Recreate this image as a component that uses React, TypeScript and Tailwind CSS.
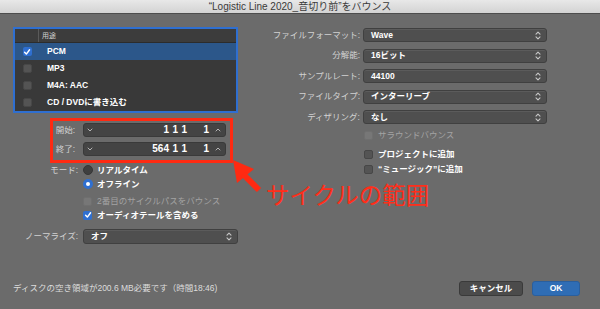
import React from 'react';

const PopupArrows = () => (
    <svg width="6" height="9" viewBox="0 0 6 9" fill="none" stroke="#c8c8c8" strokeWidth="1.1" strokeLinecap="round" strokeLinejoin="round">
        <path d="M1 3.2 3 1.2 5 3.2" />
        <path d="M1 5.8 3 7.8 5 5.8" />
    </svg>
);

const Chevron = ({ up }: { up?: boolean }) => (
    <svg width="6" height="4" viewBox="0 0 6 4" fill="none" stroke="#b5b5b5" strokeWidth="1" strokeLinecap="round" strokeLinejoin="round">
        <path d={up ? 'M1 3 3 1 5 3' : 'M1 1 3 3 5 1'} />
    </svg>
);

const Check = () => (
    <svg width="8" height="8" viewBox="0 0 10 10" fill="none" stroke="white" strokeWidth="1.8" strokeLinecap="round" strokeLinejoin="round">
        <path d="M2 5.3 4.2 7.6 8.2 2.2" />
    </svg>
);

const Box = ({ checked, disabled }: { checked?: boolean; disabled?: boolean }) => (
    <div
        className={`w-[9px] h-[9px] rounded-[2px] flex items-center justify-center shrink-0 ${
            checked ? 'bg-[#2f6fd0]' : disabled ? 'bg-[#777777] border border-[#6f6f6f]' : 'bg-[#545454] border border-[#474747]'
        }`}
    >
        {checked && <Check />}
    </div>
);

const Popup = ({ value, className = '' }: { value: string; className?: string }) => (
    <div
        className={`flex items-center justify-between h-[14px] rounded-[3px] bg-[#4f4f4f] border border-[#404040] shadow-[inset_0_1px_0_rgba(255,255,255,0.07)] pl-[7px] pr-[5px] ${className}`}
    >
        <span className="text-[8.5px] font-bold text-white leading-none">{value}</span>
        <PopupArrows />
    </div>
);

const PositionField = ({ label, bar }: { label: string; bar: string }) => (
    <div className="flex items-center h-[14px]">
        <span className="w-[25px] pr-[3px] text-right text-[8.5px] text-[#d2d2d2] leading-none">{label}</span>
        <div className="flex items-center w-[143px] h-[14px] ml-[5px] rounded-[3px] bg-[#444444] border border-[#3a3a3a] pl-[3px] pr-[4px]">
            <Chevron />
            <div className="flex-1 flex justify-end text-[10px] font-bold text-white leading-none">
                <span className="w-[24px] text-right">{bar}</span>
                <span className="w-[9px] text-right">1</span>
                <span className="w-[9px] text-right">1</span>
                <span className="w-[22px] text-right">1</span>
            </div>
            <div className="ml-[6px]">
                <Chevron up />
            </div>
        </div>
    </div>
);

const formats = [
    { name: 'PCM', checked: true },
    { name: 'MP3', checked: false },
    { name: 'M4A: AAC', checked: false },
    { name: 'CD / DVDに書き込む', checked: false },
];

const settings = [
    { label: 'ファイルフォーマット:', value: 'Wave' },
    { label: '分解能:', value: '16ビット' },
    { label: 'サンプルレート:', value: '44100' },
    { label: 'ファイルタイプ:', value: 'インターリーブ' },
    { label: 'ディザリング:', value: 'なし' },
];

export default function App() {
    return (
        <div className="relative w-[600px] h-[309px] flex flex-col bg-[#6b6b6b] overflow-hidden font-['Liberation_Sans','Noto_Sans_CJK_JP',sans-serif]">
            {/* title bar */}
            <div className="h-[14px] shrink-0 flex items-center justify-center bg-gradient-to-b from-[#e8e8e8] to-[#d3d3d3] border-b border-[#4d4d4d]">
                <span className="text-[10px] text-[#3a3a3a] leading-none">“Logistic Line 2020_音切り前”をバウンス</span>
            </div>

            <div className="flex pl-[13px] pt-[13px]">
                {/* left column */}
                <div className="w-[225px] flex flex-col">
                    <div className="border-2 border-[#2f6fd0] bg-[#393939]">
                        <div className="flex h-[14px] bg-[#3c3c3c] border-b border-[#2c2c2c]">
                            <div className="w-[24px] border-r border-[#5a5a5a]" />
                            <div className="pl-[3px] flex items-center text-[7px] text-[#cfcfcf] leading-none">用途</div>
                        </div>
                        {formats.map((f) => (
                            <div key={f.name} className={`flex items-center h-[17px] ${f.checked ? 'bg-[#2c578a]' : ''}`}>
                                <div className="w-[24px] flex justify-center">
                                    <Box checked={f.checked} />
                                </div>
                                <span className="pl-[8px] text-[8.5px] font-bold text-white leading-none">{f.name}</span>
                            </div>
                        ))}
                    </div>

                    {/* cycle range (annotated) */}
                    <div className="ml-[37px] mt-[5px] w-[183px] border-[3px] border-[#ff2a12] pt-[2px] pb-[4px] flex flex-col gap-[5px]">
                        <PositionField label="開始:" bar="1" />
                        <PositionField label="終了:" bar="564" />
                    </div>

                    <div className="flex items-center h-[14px]">
                        <span className="w-[65px] text-right text-[8.5px] text-[#d2d2d2] leading-none">モード:</span>
                        <div className="ml-[5px] w-[10px] h-[10px] rounded-full bg-[#3f3f3f] border border-[#363636]" />
                        <span className="ml-[4px] text-[8.5px] font-bold text-white leading-none">リアルタイム</span>
                    </div>
                    <div className="flex items-center h-[14px]">
                        <div className="ml-[70px] w-[10px] h-[10px] rounded-full bg-[#2f6fd0] flex items-center justify-center">
                            <div className="w-[4px] h-[4px] rounded-full bg-white" />
                        </div>
                        <span className="ml-[4px] text-[8.5px] font-bold text-white leading-none">オフライン</span>
                    </div>
                    <div className="flex items-center h-[14px] mt-[3px] ml-[70px]">
                        <Box disabled />
                        <span className="ml-[5px] text-[8.5px] text-[#a3a3a3] leading-none">2番目のサイクルパスをバウンス</span>
                    </div>
                    <div className="flex items-center h-[14px] ml-[70px]">
                        <Box checked />
                        <span className="ml-[5px] text-[8.5px] font-bold text-white leading-none">オーディオテールを含める</span>
                    </div>
                    <div className="flex items-center mt-[7px]">
                        <span className="w-[65px] text-right text-[8.5px] text-[#d2d2d2] leading-none">ノーマライズ:</span>
                        <Popup value="オフ" className="ml-[5px] w-[155px] h-[15px]" />
                    </div>
                </div>

                {/* right column */}
                <div className="w-[309px] mt-[1px] flex flex-col">
                    <div className="flex flex-col gap-[6.5px]">
                        {settings.map((s) => (
                            <div key={s.label} className="flex items-center">
                                <span className="w-[122px] text-right text-[8.5px] text-[#d2d2d2] leading-none">{s.label}</span>
                                <Popup value={s.value} className="ml-[3px] w-[184px]" />
                            </div>
                        ))}
                    </div>
                    <div className="ml-[126px] mt-[5px] flex items-center h-[12px]">
                        <Box disabled />
                        <span className="ml-[5px] text-[8.5px] text-[#a3a3a3] leading-none">サラウンドバウンス</span>
                    </div>
                    <div className="ml-[126px] mt-[7px] flex items-center h-[12px]">
                        <Box />
                        <span className="ml-[5px] text-[8.5px] font-bold text-white leading-none">プロジェクトに追加</span>
                    </div>
                    <div className="ml-[126px] mt-[3px] flex items-center h-[12px]">
                        <Box />
                        <span className="ml-[5px] text-[8.5px] font-bold text-white leading-none">“ミュージック”に追加</span>
                    </div>
                    <div className="ml-[28px] mt-[10px] text-[23.5px] text-[#ff2e1a] leading-none">サイクルの範囲</div>
                </div>
            </div>

            {/* footer */}
            <div className="mt-auto mb-[13px] h-[15px] flex items-center justify-between pl-[13px] pr-[20px]">
                <span className="text-[8.5px] text-[#dcdcdc] leading-none">ディスクの空き領域が200.6 MB必要です（時間18:46)</span>
                <div className="flex gap-[9px]">
                    <button className="w-[64px] h-[15px] rounded-[3px] bg-[#4b4b4b] border border-[#3a3a3a] text-[8.5px] font-bold text-white leading-none">
                        キャンセル
                    </button>
                    <button className="w-[48px] h-[15px] rounded-[3px] bg-[#2f6db5] border border-[#2a5f9e] text-[8.5px] font-bold text-white leading-none">
                        OK
                    </button>
                </div>
            </div>

            {/* annotation arrow */}
            <svg className="absolute left-[228px] top-[155px]" width="40" height="42" viewBox="0 0 40 42">
                <polygon points="5,5 9,28 26,14" fill="#ff2a12" />
                <line x1="15" y1="19" x2="31" y2="35" stroke="#ff2a12" strokeWidth="6" />
            </svg>
        </div>
    );
}
